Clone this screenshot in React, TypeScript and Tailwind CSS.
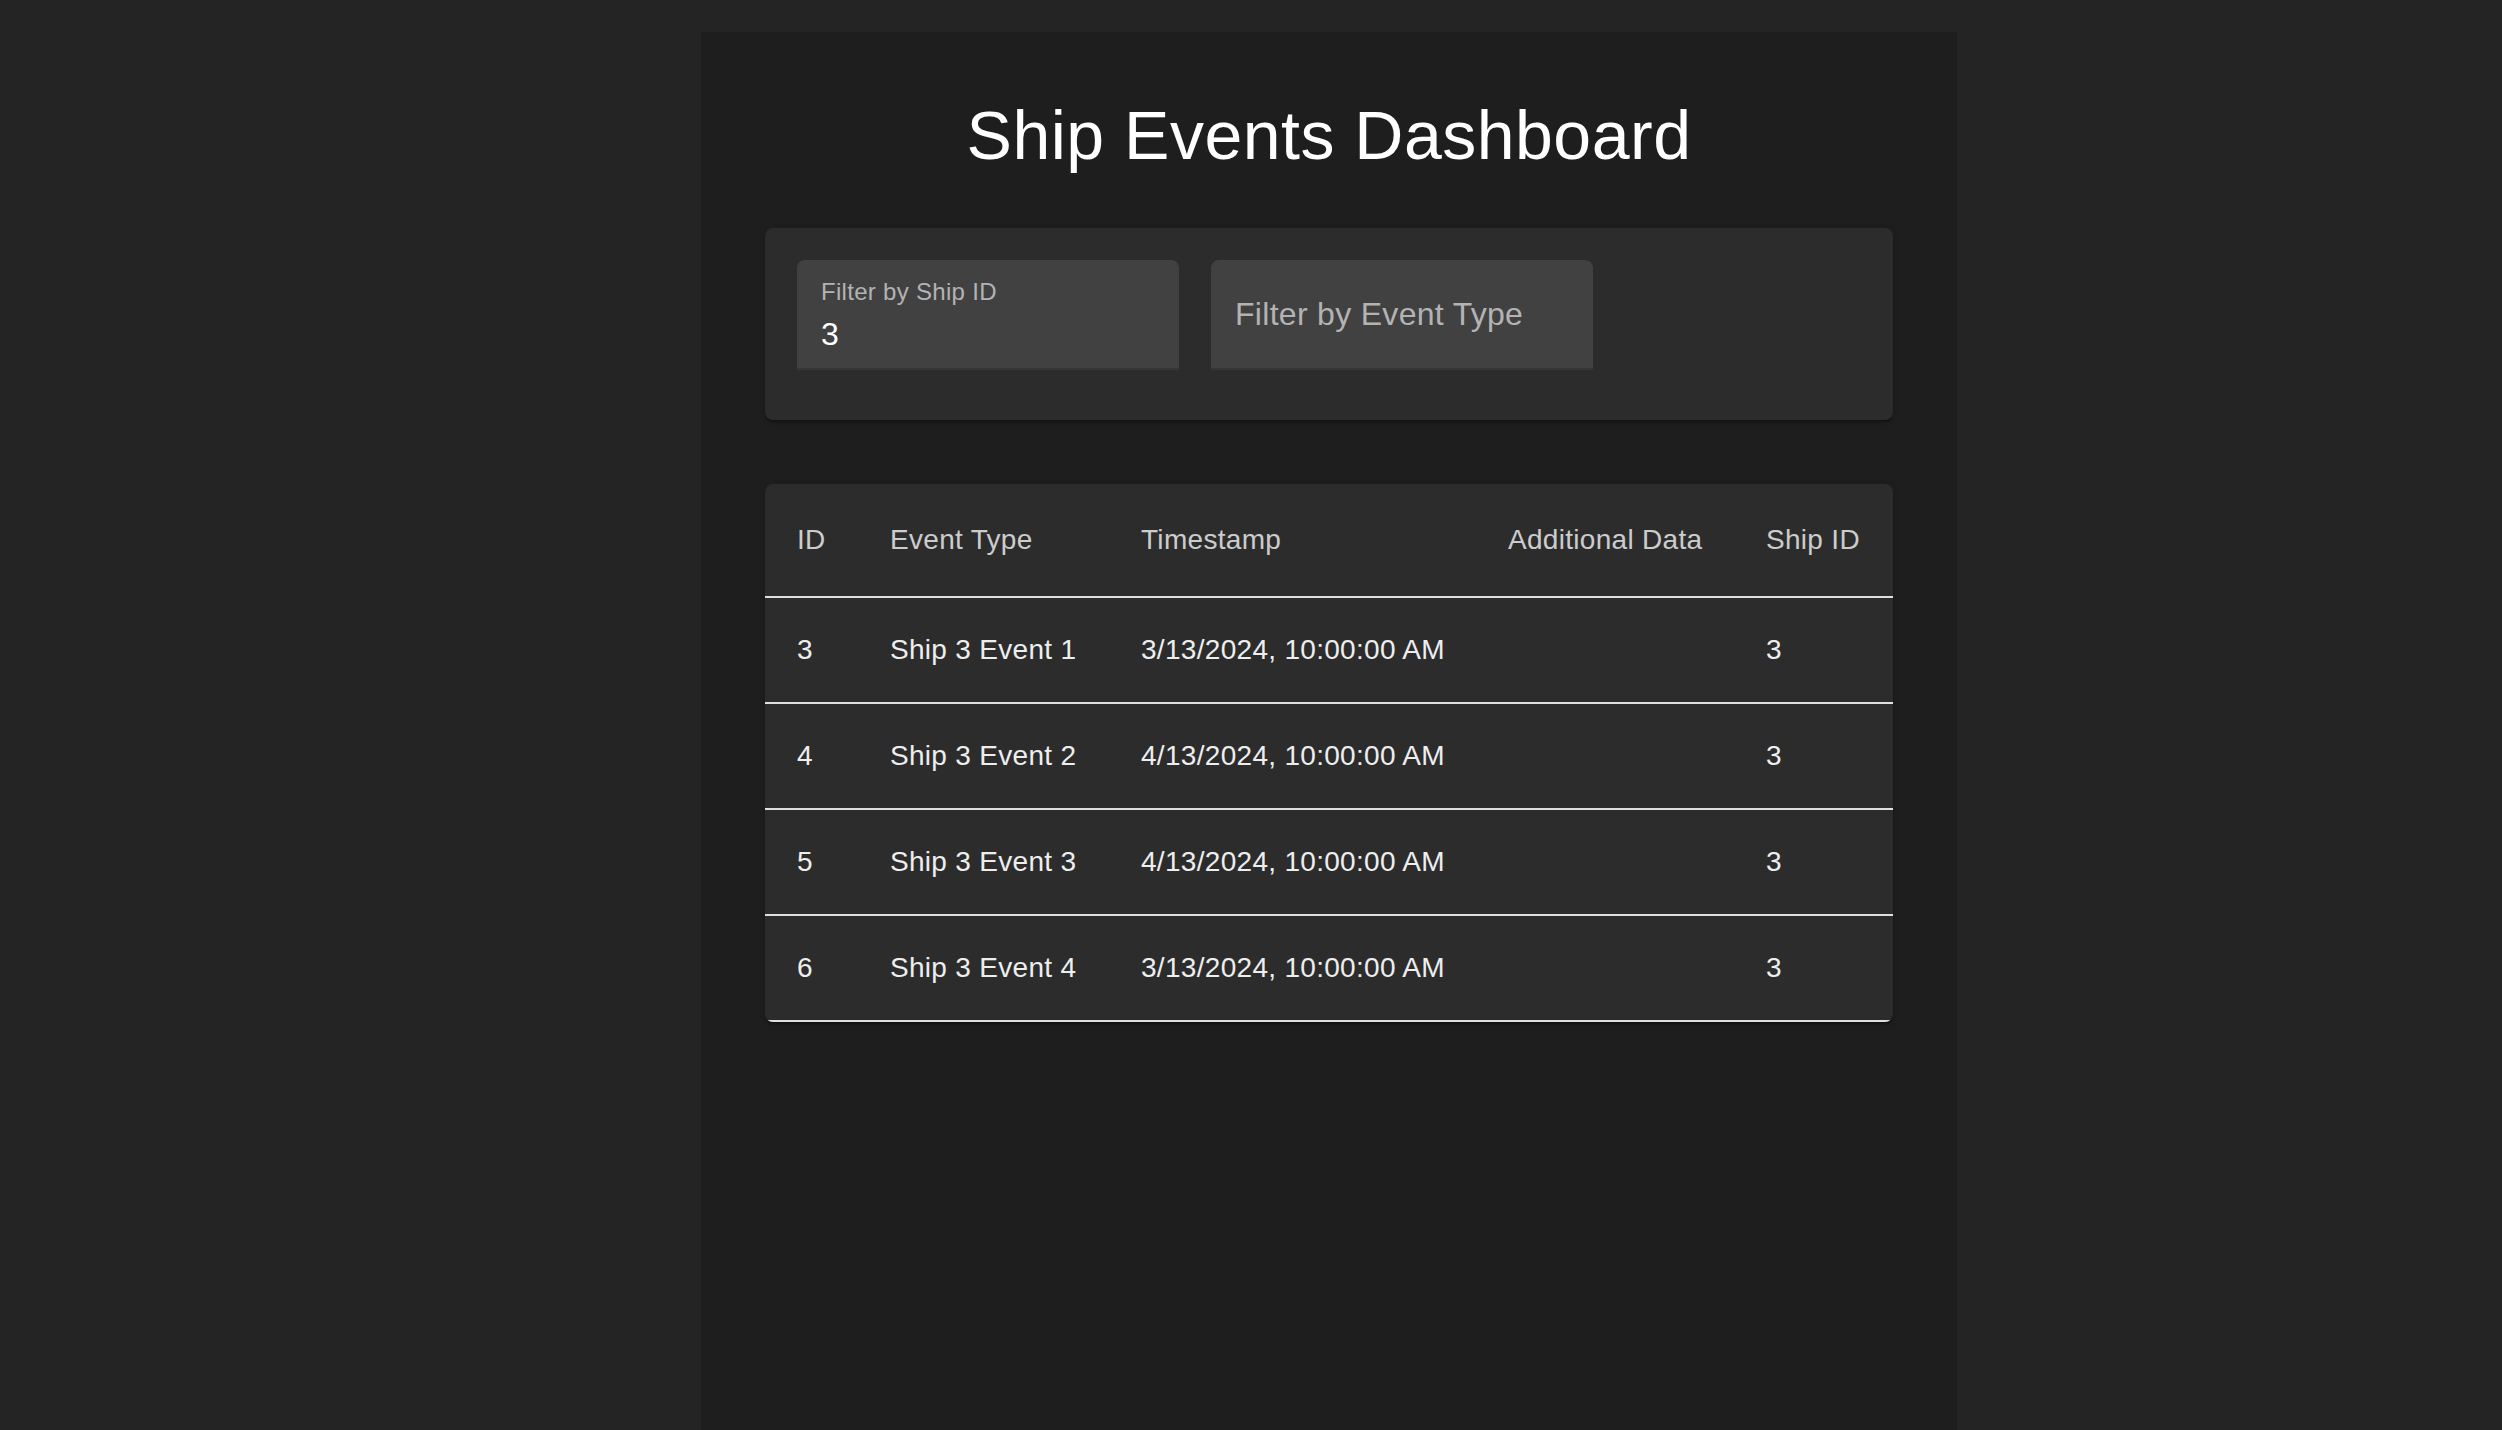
import React from 'react';

interface ShipEvent {
  id: number;
  eventType: string;
  timestamp: string;
  additionalData: string;
  shipId: number;
}

const events: ShipEvent[] = [
  { id: 3, eventType: 'Ship 3 Event 1', timestamp: '3/13/2024, 10:00:00 AM', additionalData: '', shipId: 3 },
  { id: 4, eventType: 'Ship 3 Event 2', timestamp: '4/13/2024, 10:00:00 AM', additionalData: '', shipId: 3 },
  { id: 5, eventType: 'Ship 3 Event 3', timestamp: '4/13/2024, 10:00:00 AM', additionalData: '', shipId: 3 },
  { id: 6, eventType: 'Ship 3 Event 4', timestamp: '3/13/2024, 10:00:00 AM', additionalData: '', shipId: 3 },
];

const paperShadow =
  'shadow-[0_4px_2px_-2px_rgba(0,0,0,0.2),0_2px_2px_0_rgba(0,0,0,0.14),0_2px_6px_0_rgba(0,0,0,0.12)]';

const FilledField: React.FC<{ label: string; value?: string }> = ({ label, value }) => {
  if (value) {
    return (
      <div className="w-[382px] h-[110px] rounded-t-lg bg-[#414141] border-b-2 border-[#353535] px-6 pt-[15px]">
        <div className="text-[24px] leading-[34px] text-[#b3b3b3] tracking-[0.3px]">{label}</div>
        <div className="mt-[2px] text-[32px] leading-[46px] text-white">{value}</div>
      </div>
    );
  }
  return (
    <div className="w-[382px] h-[110px] rounded-t-lg bg-[#414141] border-b-2 border-[#353535] px-6 flex items-center">
      <span className="text-[32px] leading-[46px] text-[#b3b3b3] tracking-[0.3px]">{label}</span>
    </div>
  );
};

const App: React.FC = () => {
  const cols = ['w-[93px]', 'w-[251px]', 'w-[367px]', 'w-[258px]', 'w-[159px]'];
  const heads = ['ID', 'Event Type', 'Timestamp', 'Additional Data', 'Ship ID'];
  const cell = 'p-8 text-[28px] leading-[40px] text-[#eeeeee] tracking-[0.3px] whitespace-nowrap';

  return (
    <div className="min-h-screen bg-[#242424] pt-8 font-['Liberation_Sans',Arial,sans-serif]">
      <div className="ml-[701px] w-[1256px] min-h-[1398px] bg-[#1e1e1e] px-16 pt-[61px]">
        <h1 className="text-center text-[68px] leading-[84px] text-white tracking-[0.5px] mb-[51px]">
          Ship Events Dashboard
        </h1>

        <div className={`bg-[#2c2c2c] rounded-lg px-8 pt-8 pb-[50px] ${paperShadow}`}>
          <div className="flex gap-8">
            <FilledField label="Filter by Ship ID" value="3" />
            <FilledField label="Filter by Event Type" />
          </div>
        </div>

        <div className={`mt-16 bg-[#2c2c2c] rounded-lg overflow-hidden ${paperShadow}`}>
          <table className="w-full table-fixed border-collapse text-left">
            <thead>
              <tr className="border-b-2 border-[#e0e0e0]">
                {heads.map((h, i) => (
                  <th
                    key={h}
                    className={`${cols[i]} p-8 text-[28px] leading-[48px] font-normal text-[#cccccc] tracking-[0.3px] whitespace-nowrap`}
                  >
                    {h}
                  </th>
                ))}
              </tr>
            </thead>
            <tbody>
              {events.map((ev) => (
                <tr key={ev.id} className="border-b-2 border-[#e0e0e0]">
                  <td className={cell}>{ev.id}</td>
                  <td className={cell}>{ev.eventType}</td>
                  <td className={cell}>{ev.timestamp}</td>
                  <td className={cell}>{ev.additionalData}</td>
                  <td className={cell}>{ev.shipId}</td>
                </tr>
              ))}
            </tbody>
          </table>
        </div>
      </div>
    </div>
  );
};

export default App;
